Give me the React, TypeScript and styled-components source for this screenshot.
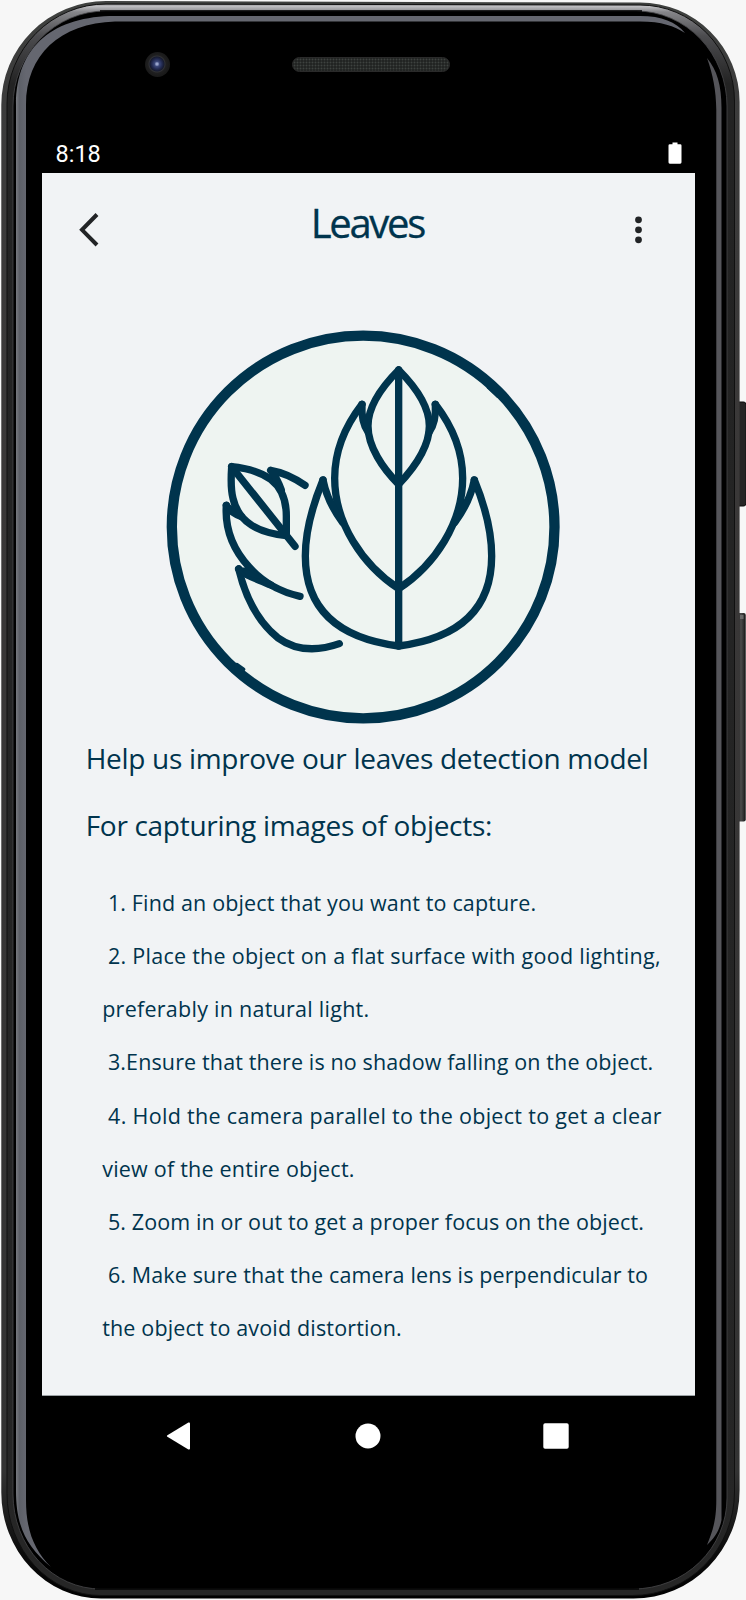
import React from 'react';
import styled, { createGlobalStyle } from 'styled-components';

const NAVY = '#00344d';

const GlobalStyle = createGlobalStyle`
  *, *::before, *::after { box-sizing: border-box; }
  body { margin: 0; background: #f7f7f7; }
`;

const Stage = styled.div`
  position: relative;
  width: 746px;
  height: 1600px;
  overflow: hidden;
  background: #f7f7f7;
`;

const CasingArt = styled.svg`
  position: absolute;
  inset: 0;
`;

const Device = styled.div`
  position: relative;
  width: 694.7px;
  padding-left: 42px;
  display: flex;
  flex-direction: column;
`;

const Forehead = styled.div`
  height: 129px;
  padding: 52px 0 0 103px;
  display: flex;
  align-items: flex-start;
`;

const Camera = styled.div`
  width: 25px;
  height: 25px;
  border-radius: 50%;
  background: radial-gradient(circle at 48% 48%, #98a4cc 0 1px, #3b4779 2.5px, #232b52 5px, #171b30 7px, #303134 8px, #1f1f20 9px, #1a1a1a 12px);
`;

const Speaker = styled.div`
  width: 158px;
  height: 15px;
  margin: 5px 0 0 122px;
  border-radius: 8px;
  border: 1px solid #2a2a2a;
  background:
    radial-gradient(circle, #3e4240 0.8px, transparent 1.2px) 0 0 / 3px 3px,
    radial-gradient(circle, #303332 0.8px, transparent 1.2px) 1.5px 1.5px / 3px 3px,
    #141414;
`;

const StatusBar = styled.div`
  height: 44px;
  padding: 10px 13px 0 13.5px;
  display: flex;
  justify-content: space-between;
  color: #fff;
  font: 23.5px/30px Roboto, sans-serif;
`;

const BatteryIcon = styled.svg`
  margin-top: 3px;
`;

const Screen = styled.main`
  height: 1222.5px;
  background: #f1f3f5;
  border-bottom: 1px solid #9ba1a4;
  color: ${NAVY};
  font-family: 'Open Sans', sans-serif;
`;

const AppBar = styled.header`
  height: 157px;
  padding: 19px 50px 0 35px;
  display: flex;
  justify-content: space-between;
  align-items: flex-start;
`;

const IconButton = styled.button`
  display: flex;
  margin: 20px 0 0;
  padding: 0;
  border: 0;
  background: none;
`;

const Title = styled.h1`
  margin: 1px 0 0 2px;
  font-size: 40px;
  font-weight: 400;
  line-height: 60px;
  letter-spacing: -2.3px;
  -webkit-text-stroke: 0.3px ${NAVY};
`;

const Logo = styled.svg`
  display: block;
  margin-left: 124.4px;
`;

const Heading = styled.h2<{ $track: number }>`
  margin: 0 0 0 43.7px;
  font-size: 28px;
  font-weight: 400;
  line-height: 66.6px;
  white-space: nowrap;
  letter-spacing: ${p => p.$track}px;
`;

const Copy = styled.section`
  padding-top: 1px;
`;

const Steps = styled.div`
  margin: 17.5px 0 0 60.2px;
`;

const StepLine = styled.div<{ $track: number }>`
  font-size: 21.5px;
  line-height: 53.2px;
  white-space: pre;
  letter-spacing: ${p => p.$track}px;
`;

const NavBar = styled.nav`
  height: 80px;
  padding: 0 126px 0 124px;
  display: flex;
  justify-content: space-between;
  align-items: center;
`;

const HomeIcon = styled.svg`
  margin-left: 1.4px;
`;

const steps: { text: string; track: number }[] = [
  { text: ' 1. Find an object that you want to capture.', track: 0.14 },
  { text: ' 2. Place the object on a flat surface with good lighting,', track: 0.26 },
  { text: 'preferably in natural light.', track: 0.26 },
  { text: ' 3.Ensure that there is no shadow falling on the object.', track: 0.13 },
  { text: ' 4. Hold the camera parallel to the object to get a clear', track: 0.31 },
  { text: 'view of the entire object.', track: 0.22 },
  { text: ' 5. Zoom in or out to get a proper focus on the object.', track: 0.11 },
  { text: ' 6. Make sure that the camera lens is perpendicular to', track: 0.13 },
  { text: 'the object to avoid distortion.', track: 0.16 },
];

function Casing() {
  return (
    <CasingArt width="746" height="1600" viewBox="0 0 746 1600" aria-hidden="true">
      <defs>
        <linearGradient id="rim" gradientUnits="userSpaceOnUse" x1="0" y1="1" x2="0" y2="1599">
          <stop offset="0" stopColor="#3f413f" />
          <stop offset="0.05" stopColor="#3c3c3c" />
          <stop offset="0.3" stopColor="#3a3838" />
          <stop offset="0.92" stopColor="#333" />
          <stop offset="0.97" stopColor="#0c0c0c" />
          <stop offset="1" stopColor="#000" />
        </linearGradient>
        <linearGradient id="band" gradientUnits="userSpaceOnUse" x1="0" y1="4" x2="0" y2="1596">
          <stop offset="0" stopColor="#6a6a6c" />
          <stop offset="0.0012" stopColor="#c2c2c5" />
          <stop offset="0.005" stopColor="#86868a" />
          <stop offset="0.02" stopColor="#4c4c4f" />
          <stop offset="0.05" stopColor="#232323" />
          <stop offset="1" stopColor="#262626" />
        </linearGradient>
        <linearGradient id="glassL" gradientUnits="userSpaceOnUse" x1="16" y1="0" x2="26" y2="0">
          <stop offset="0" stopColor="#77797f" />
          <stop offset="0.35" stopColor="#5d6068" />
          <stop offset="1" stopColor="#656770" />
        </linearGradient>
        <linearGradient id="button" x1="0" y1="0" x2="1" y2="0">
          <stop offset="0" stopColor="#151515" />
          <stop offset="0.45" stopColor="#4b4b4b" />
          <stop offset="0.75" stopColor="#303030" />
          <stop offset="1" stopColor="#111" />
        </linearGradient>
      </defs>
      <rect x="737" y="402" width="8.7" height="104" rx="2" fill="#262525" stroke="#0c0c0c" />
      <rect x="737" y="613" width="8.7" height="208.5" rx="2" fill="url(#button)" />
      <rect x="740" y="615" width="3.5" height="4" fill="#6a6a6a" />
      <path
        d="M106 1 L640 2.5 A99.6 99.6 0 0 1 739.6 102 V1490 A106 108.5 0 0 1 633.6 1598.5 H101 A99.7 106 0 0 1 1.3 1492.5 V105 A104.7 104 0 0 1 106 1Z"
        fill="url(#rim)"
      />
      <path
        d="M106 4 L640 5 A94.5 96 0 0 1 734.5 101 V1492 A102 103.5 0 0 1 632.5 1595.5 H101 A94 102 0 0 1 7 1493.5 V104 A99 100 0 0 1 106 4Z"
        fill="url(#band)"
        stroke="#101010"
        strokeWidth="1"
      />
      <path
        d="M106 11 H636 A91 95 0 0 1 727 106 V1498 A94 91 0 0 1 633 1589 H101 A88 95 0 0 1 13 1494 V106 A93 95 0 0 1 106 11Z"
        fill="#000"
        stroke="#48484a"
        strokeWidth="0.8"
      />
      <path d="M100 11 H642 M95 1589 H639" stroke="#000" strokeWidth="1.6" />
      <path
        d="M51 1567 C25 1545 16 1525 16 1490 V105 C16 45 55 16 115 16 H640 C662 16 676 22 685 33 C674 26 662 21.5 640 21.5 H115 C60 23 26 55 26 105 V1500 C26 1530 34 1550 51 1567Z"
        fill="url(#glassL)"
      />
      <path
        d="M707 58 C717 70 721.5 85 721.5 108 V1520 C719 1532 714 1538 707 1545 C713 1530 716.3 1520 716.3 1500 V110 C716 90 713 75 707 58Z"
        fill="#55555a"
      />
    </CasingArt>
  );
}

function LeavesLogo() {
  return (
    <Logo width="394" height="394" viewBox="50 60 1182 1182" fill="none" stroke={NAVY} strokeLinecap="round" strokeLinejoin="round">
      <circle cx="641.5" cy="651" r="574" fill="#eef4f1" strokeWidth="31" />
      <path d="M1018 232 L1046 258 L1034 222Z M262 1064 L282 1078 L262 1085Z" strokeWidth="12" fill={NAVY} />
      <g strokeWidth="22">
        <path d="M748 180 V1008" />
        <path d="M748 180 C700 228 656 290 656 348 C656 410 700 475 748 523 C800 468 840 410 840 348 C840 290 796 228 748 180Z" />
        <path d="M638 283 C590 345 556 420 556 505 C556 640 640 765 748 836 C856 765 940 640 940 505 C940 420 906 345 858 283" />
        <path d="M638 283 C636 318 642 346 656 366 M858 283 C860 318 854 346 840 366" />
        <path d="M521 510 C488 590 468 660 468 738 C468 900 570 985 748 1008 C926 985 1027 900 1027 738 C1027 660 1008 590 975 510" />
        <path d="M521 510 C530 556 548 594 580 638 M975 510 C966 556 948 594 916 638" />
        <path d="M247 470 L437 709" />
        <path d="M247 470 C340 480 412 512 411 620 L411 677 C330 668 268 640 251 565 C243 535 245 500 247 470Z" />
        <path d="M364 481 C400 487 430 500 467 526 M364 481 C376 496 386 512 396 540" />
        <path d="M231 586 C226 660 252 720 300 772 C344 820 390 846 452 859" />
        <path d="M231 586 C240 602 256 612 276 620" />
        <path d="M268 777 C290 868 332 940 385 983 C440 1023 505 1024 570 1001" />
        <path d="M268 777 C290 800 330 808 366 826" />
      </g>
      <path d="M232 588 L256 592 L276 616 L246 606Z M268 777 L300 776 L356 818 L290 800Z" fill={NAVY} strokeWidth="8" />
      <path d="M645 325 L652 350 M851 325 L844 350 M546 575 L562 606 M950 575 L934 606" strokeWidth="14" />
    </Logo>
  );
}

export default function App() {
  return (
    <Stage>
      <GlobalStyle />
      <Casing />
      <Device>
        <Forehead>
          <Camera />
          <Speaker />
        </Forehead>
        <StatusBar>
          <span>8:18</span>
          <BatteryIcon width="14" height="22" viewBox="0 0 14 22" fill="#fff">
            <path d="M1.8 2.2H4.5V0.6H9.5V2.2H12.2Q13.5 2.2 13.5 3.5V20.3Q13.5 21.7 12.2 21.7H1.8Q.5 21.7 .5 20.3V3.5Q.5 2.2 1.8 2.2Z" />
          </BatteryIcon>
        </StatusBar>
        <Screen>
          <AppBar>
            <IconButton aria-label="Back">
              <svg width="24" height="36" viewBox="0 0 24 36" fill="none" stroke="#222426" strokeWidth="4">
                <path d="M20 2.5L5 17.8L20 33" />
              </svg>
            </IconButton>
            <Title>Leaves</Title>
            <IconButton aria-label="More options">
              <svg width="13" height="36" viewBox="0 0 13 36" fill="#222426">
                <circle cx="6.5" cy="7.8" r="3.4" />
                <circle cx="6.5" cy="17.8" r="3.4" />
                <circle cx="6.5" cy="27.8" r="3.4" />
              </svg>
            </IconButton>
          </AppBar>
          <LeavesLogo />
          <Copy>
            <Heading $track={-0.3}>Help us improve our leaves detection model</Heading>
            <Heading $track={-0.3}>For capturing images of objects:</Heading>
            <Steps>
              {steps.map(step => (
                <StepLine key={step.text} $track={step.track}>{step.text}</StepLine>
              ))}
            </Steps>
          </Copy>
        </Screen>
        <NavBar>
          <svg width="25" height="30" viewBox="0 0 25 30" fill="#fff">
            <path d="M1.4 14.2L22.4 1.6Q24 1 24 2.6V27.4Q24 29 22.4 28.4L1.4 15.8Q.2 15 1.4 14.2Z" />
          </svg>
          <HomeIcon width="26" height="26" viewBox="0 0 26 26" fill="#fff">
            <circle cx="13" cy="13" r="12.5" />
          </HomeIcon>
          <svg width="26" height="26" viewBox="0 0 26 26" fill="#fff">
            <rect x=".3" y=".2" width="25.4" height="25.6" rx="1.8" />
          </svg>
        </NavBar>
      </Device>
    </Stage>
  );
}
